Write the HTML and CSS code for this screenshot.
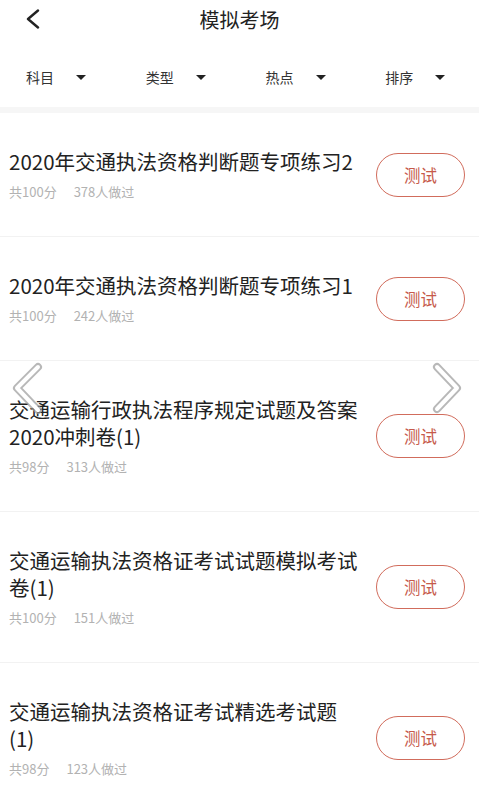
FILE: index.html
```html
<!DOCTYPE html>
<html lang="zh-CN">
<head>
    <meta charset="utf-8" />
    <title>模拟考场</title>
    <link rel="stylesheet" href="styles.css">
</head>
<body>
    <div class="header">
        <svg class="back" width="14" height="20" viewBox="0 0 14 20">
            <polyline points="12,1.5 2,10 12,18.5" fill="none" stroke="#222" stroke-width="2.4" stroke-linecap="round" stroke-linejoin="round"/>
        </svg>
        <h1>模拟考场</h1>
    </div>

    <div class="filters">
        <div class="filter">科目<span class="caret"></span></div>
        <div class="filter">类型<span class="caret"></span></div>
        <div class="filter">热点<span class="caret"></span></div>
        <div class="filter">排序<span class="caret"></span></div>
    </div>

    <div class="list">
        <div class="item">
            <div class="info">
                <div class="title">2020年交通执法资格判断题专项练习2</div>
                <div class="meta"><span>共100分</span><span>378人做过</span></div>
            </div>
            <button class="button">测试</button>
        </div>
        <div class="item">
            <div class="info">
                <div class="title">2020年交通执法资格判断题专项练习1</div>
                <div class="meta"><span>共100分</span><span>242人做过</span></div>
            </div>
            <button class="button">测试</button>
        </div>
        <div class="item">
            <div class="info">
                <div class="title">交通运输行政执法程序规定试题及答案2020冲刺卷(1)</div>
                <div class="meta"><span>共98分</span><span>313人做过</span></div>
            </div>
            <button class="button">测试</button>
        </div>
        <div class="item">
            <div class="info">
                <div class="title">交通运输执法资格证考试试题模拟考试卷(1)</div>
                <div class="meta"><span>共100分</span><span>151人做过</span></div>
            </div>
            <button class="button">测试</button>
        </div>
        <div class="item">
            <div class="info">
                <div class="title">交通运输执法资格证考试精选考试题(1)</div>
                <div class="meta"><span>共98分</span><span>123人做过</span></div>
            </div>
            <button class="button">测试</button>
        </div>
    </div>

    <!-- image viewer arrows on top of the page -->
    <svg class="arrow arrow-left" width="40" height="60" viewBox="0 0 40 60">
        <polyline points="30,6 9,27 30,49" fill="none" stroke="#9a9a9a" stroke-width="8" stroke-linecap="round" stroke-linejoin="round" opacity="0.7"/>
        <polyline points="30,6 9,27 30,49" fill="none" stroke="#fff" stroke-width="4" stroke-linecap="round" stroke-linejoin="round"/>
    </svg>
    <svg class="arrow arrow-right" width="40" height="60" viewBox="0 0 40 60">
        <polyline points="10,6 30,27 10,48" fill="none" stroke="#9a9a9a" stroke-width="8" stroke-linecap="round" stroke-linejoin="round" opacity="0.7"/>
        <polyline points="10,6 30,27 10,48" fill="none" stroke="#fff" stroke-width="4" stroke-linecap="round" stroke-linejoin="round"/>
    </svg>
</body>
</html>
```

FILE: styles.css
```css
body {
    margin: 0;
    width: 479px;
    font-family: "Noto Sans CJK SC", "Noto Sans", sans-serif;
    background: #fff;
    color: #222;
    position: relative;
}

.header {
    height: 40px;
    display: flex;
    align-items: center;
    justify-content: center;
    position: relative;
}

.header h1 {
    margin: 0;
    font-size: 20px;
    font-weight: normal;
    line-height: 40px;
}

.back {
    position: absolute;
    left: 26px;
    top: 9px;
}

.filters {
    display: grid;
    grid-template-columns: repeat(4, 1fr);
    padding: 23px 0 16px;
}

.filter {
    display: flex;
    align-items: center;
    padding-left: 26px;
    font-size: 14px;
    line-height: 28px;
    color: #333;
}

.caret {
    width: 0;
    height: 0;
    margin-left: 22px;
    border-left: 5.5px solid transparent;
    border-right: 5.5px solid transparent;
    border-top: 5.5px solid #222;
}

.list {
    border-top: 6px solid #f6f6f6;
}

.item {
    display: flex;
    align-items: center;
    padding: 35px 14px 35px 9px;
    border-bottom: 1px solid #f2f2f2;
}

.info {
    flex: 1;
}

.title {
    font-size: 20.5px;
    line-height: 27px;
    color: #222;
}

.meta {
    display: flex;
    gap: 17px;
    margin-top: 8px;
    font-size: 13px;
    line-height: 18px;
    color: #b2b2b2;
}

.button {
    width: 89px;
    height: 44px;
    margin-left: 17px;
    flex-shrink: 0;
    border: 1.5px solid #d16c5c;
    border-radius: 22px;
    background: #fff;
    color: #c65a4b;
    font-family: inherit;
    font-size: 16.5px;
    cursor: pointer;
}

.arrow {
    position: absolute;
    top: 361px;
}

.arrow-left {
    left: 8px;
}

.arrow-right {
    left: 427px;
}
```
